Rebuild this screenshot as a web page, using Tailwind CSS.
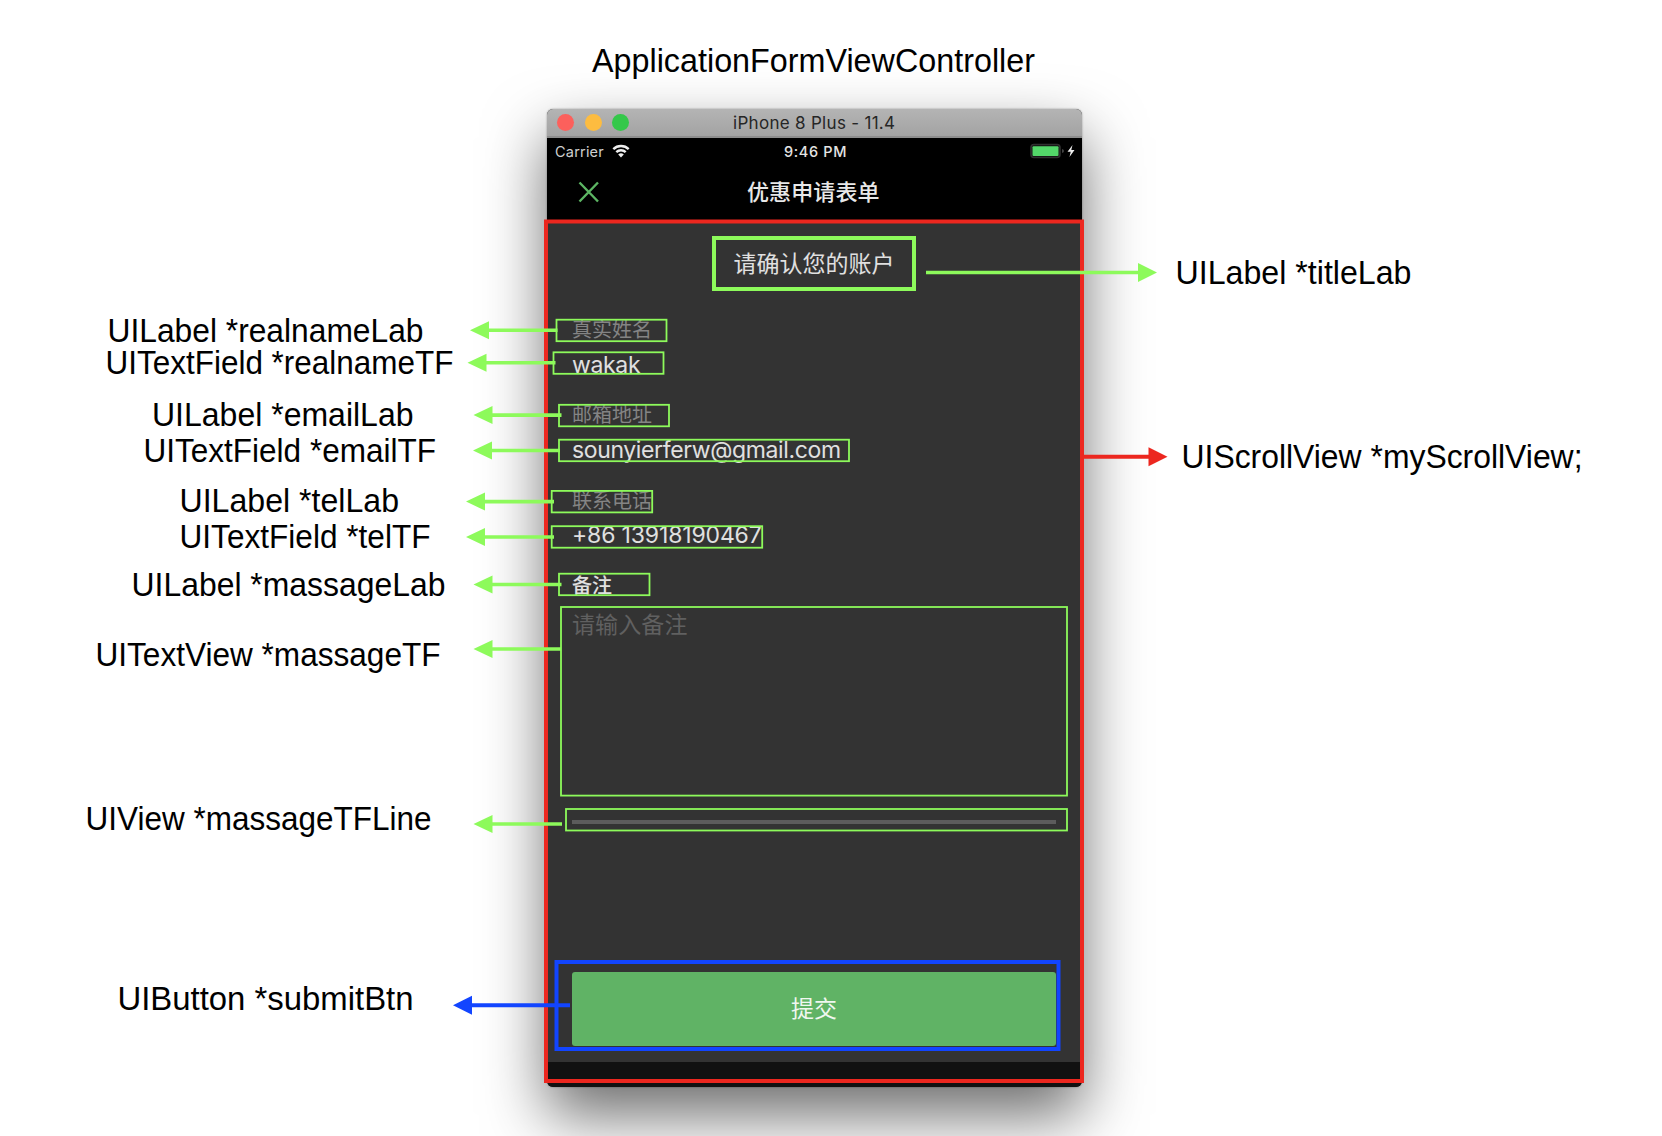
<!DOCTYPE html>
<html lang="zh-CN">
<head>
<meta charset="utf-8">
<title>ApplicationFormViewController</title>
<script src="https://cdn.jsdelivr.net/npm/@tailwindcss/browser@4"></script>
</head>
<body class="bg-white">
<div class="relative w-[1662px] h-[1136px] overflow-hidden pt-[109px] pl-[547px]">

  <!-- Simulator window -->
  <main class="w-[535px] h-[978px] flex flex-col rounded-md overflow-hidden bg-[#333333] font-['Inter','Noto_Sans_CJK_SC',sans-serif] shadow-[0_0_2px_rgba(0,0,0,0.4),0_28px_62px_rgba(0,0,0,0.58)]">
    <header class="h-[29px] shrink-0 flex items-center bg-linear-to-b from-[#b4b4b4] to-[#a3a3a3] border-b-2 border-[#8d8d8d] pl-[10px]">
      <div class="flex gap-[10.5px] w-[176px]">
        <span class="w-[17px] h-[17px] rounded-full bg-[#fc605c]"></span>
        <span class="w-[17px] h-[17px] rounded-full bg-[#fdbc40]"></span>
        <span class="w-[17px] h-[17px] rounded-full bg-[#34c84a]"></span>
      </div>
      <span class="text-[17px] leading-7 tracking-[0.3px] text-[#262626] whitespace-nowrap pt-px">iPhone 8 Plus - 11.4</span>
    </header>

    <div class="h-[28px] shrink-0 bg-black flex items-center text-white px-2">
      <span class="text-[14.5px] tracking-[0.2px] text-[#cfcfcf] w-[57px]">Carrier</span>
      <svg class="w-[18px] h-[14px] -mt-0.5" viewBox="0 0 18 14" fill="none" stroke="#eee" stroke-width="2.4"><path d="M1.3 5.2a11 11 0 0 1 15.4 0M4.3 8.2a6.8 6.8 0 0 1 9.4 0"/><path d="M9 13.5 6.2 10.6a4 4 0 0 1 5.6 0z" fill="#eee" stroke="none"/></svg>
      <span class="text-[14.5px] font-medium tracking-[0.65px] text-[#e4e4e4] ml-[154px] whitespace-nowrap">9:46 PM</span>
      <svg class="ml-auto w-[46px] h-4 -mr-0.5 -mt-0.5" viewBox="0 0 46 16"><rect x="1" y="1.5" width="29" height="13" rx="3" fill="#111" stroke="#303030" stroke-width="1.6"/><rect x="2.5" y="3.2" width="26" height="9.800" rx="1" fill="#53d769"/><path d="M32 6v4q2-.6 2-2t-2-2" fill="#444"/><path d="M42.500 2 37.500 8.800h3.200L39.500 14l5-7h-3.200z" fill="#eee"/></svg>
    </div>

    <nav class="h-[54px] shrink-0 bg-black flex items-start">
      <svg class="w-[22px] h-[22px] mt-[15px] ml-[31px]" viewBox="0 0 22 22" stroke="#5cb563" stroke-width="2.4"><path d="M1.500 1.500 20 20.500M20 1.500 1.500 20.500"/></svg>
      <h2 class="ml-[147px] mt-[10px] text-[22px] leading-8 font-medium tracking-[0.1px] text-[#e8e8e8] whitespace-nowrap">优惠申请表单</h2>
    </nav>

    <form class="flex-1 flex flex-col pl-[25px] pr-[26px] text-[#e0e0e0]">
      <h3 class="mt-[22px] h-11 text-[23px] leading-11 text-center">请确认您的账户</h3>
      <label class="mt-8 h-6 text-[20px] leading-6 text-[#848484]">真实姓名</label>
      <div class="mt-[9px] h-7 text-[23px] leading-7 tracking-[-0.35px]">wakak</div>
      <label class="mt-[24px] h-6 text-[20px] leading-6 text-[#848484]">邮箱地址</label>
      <div class="mt-[9px] h-7 text-[23px] leading-7 tracking-[-0.37px]">sounyierferw@gmail.com</div>
      <label class="mt-[25px] h-6 text-[20px] leading-6 text-[#848484]">联系电话</label>
      <div class="mt-2 h-7 text-[23px] leading-7 tracking-[-0.15px]">+86 13918190467</div>
      <label class="mt-[25px] h-6 text-[20px] leading-6 font-medium">备注</label>
      <div class="mt-[13px] h-[209px] text-[23px] leading-7 tracking-[0.1px] text-[#606060] border-b-4 border-[#5c5c5c] box-content">请输入备注</div>
      <button type="button" class="mt-[148px] h-[74px] shrink-0 rounded-[3px] bg-[#60b365] text-[23px] text-[#f0f7f0]">提交</button>
    </form>
    <footer class="h-[25px] shrink-0 bg-[#111111]"></footer>
  </main>

  <!-- Annotation layer -->
  <svg class="absolute inset-0 w-[1662px] h-[1136px]" viewBox="0 0 1662 1136" font-family="Liberation Sans, Arial, sans-serif" font-size="32.500">
    <rect x="546" y="221.500" width="536" height="859.500" fill="none" stroke="#ec271f" stroke-width="4"/>
    <rect x="556.500" y="962" width="502" height="87" fill="none" stroke="#1245ff" stroke-width="4"/>
    <g fill="none" stroke="#8dfa5b" stroke-width="1.800">
      <rect x="714" y="238" width="200" height="51" stroke-width="4"/>
      <rect x="556.500" y="319.700" width="110" height="21.500"/>
      <rect x="553.500" y="352.300" width="110" height="21.500"/>
      <rect x="559" y="404.800" width="110" height="21.500"/>
      <rect x="559" y="439.700" width="290" height="21.500"/>
      <rect x="551.700" y="490.900" width="100.500" height="21.500"/>
      <rect x="551.700" y="526.200" width="210.500" height="21.500"/>
      <rect x="559" y="573.700" width="90.500" height="21.500"/>
      <rect x="561" y="607" width="506" height="188.600"/>
      <rect x="566" y="809" width="501" height="21.500"/>
    </g>
    <g stroke="#8dfa5b" stroke-width="3.600">
      <path d="M486 330.300H557.500M483 362.700H555.500M489 415.100H561.500M489 450.500H560M482 501.600H554M482 537H554M489 584.500H561.500M489 649H561M489 824H562M926 272.500H1140"/>
    </g>
    <path d="M470 330.300l19-9v18zM467.500 362.700l19-9v18zM473.500 415.100l19-9v18zM473 450.500l19-9v18zM466 501.600l19-9v18zM466 537l19-9v18zM473.500 584.500l19-9v18zM473.500 649l19-9v18zM473.500 824l19-9v18zM1157 272.500l-19-9.500v19z" fill="#8dfa5b"/>
    <path d="M468 1005.300H570" stroke="#1245ff" stroke-width="4"/><path d="M453 1005.300l19-9.500v19z" fill="#1245ff"/>
    <path d="M1080 456.700H1150" stroke="#ec271f" stroke-width="4"/><path d="M1167.500 456.700l-19-9.500v19z" fill="#ec271f"/>
    <g fill="#000">
      <text x="592" y="71.700" textLength="443" lengthAdjust="spacingAndGlyphs">ApplicationFormViewController</text>
      <text x="107.500" y="341.700" textLength="316" lengthAdjust="spacingAndGlyphs">UILabel *realnameLab</text>
      <text x="105.500" y="373.700" textLength="348" lengthAdjust="spacingAndGlyphs">UITextField *realnameTF</text>
      <text x="152" y="425.700" textLength="261.500" lengthAdjust="spacingAndGlyphs">UILabel *emailLab</text>
      <text x="143.500" y="462" textLength="292.500" lengthAdjust="spacingAndGlyphs">UITextField *emailTF</text>
      <text x="179.500" y="511.700" textLength="219.500" lengthAdjust="spacingAndGlyphs">UILabel *telLab</text>
      <text x="179.500" y="547.700" textLength="251" lengthAdjust="spacingAndGlyphs">UITextField *telTF</text>
      <text x="131.500" y="596" textLength="314" lengthAdjust="spacingAndGlyphs">UILabel *massageLab</text>
      <text x="95.500" y="665.700" textLength="345" lengthAdjust="spacingAndGlyphs">UITextView *massageTF</text>
      <text x="85.500" y="830" textLength="346" lengthAdjust="spacingAndGlyphs">UIView *massageTFLine</text>
      <text x="117.500" y="1010" textLength="296" lengthAdjust="spacingAndGlyphs">UIButton *submitBtn</text>
      <text x="1175.500" y="283.700" textLength="236" lengthAdjust="spacingAndGlyphs">UILabel *titleLab</text>
      <text x="1181.500" y="468" textLength="401" lengthAdjust="spacingAndGlyphs">UIScrollView *myScrollView;</text>
    </g>
  </svg>
</div>
</body>
</html>
